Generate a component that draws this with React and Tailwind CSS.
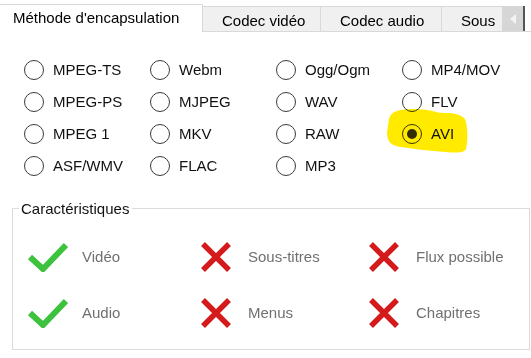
import React from 'react';

const font = { fontFamily: '"Liberation Sans", Arial, sans-serif' };

const rows = [
    ['MPEG-TS', 'Webm', 'Ogg/Ogm', 'MP4/MOV'],
    ['MPEG-PS', 'MJPEG', 'WAV', 'FLV'],
    ['MPEG 1', 'MKV', 'RAW', 'AVI'],
    ['ASF/WMV', 'FLAC', 'MP3', null],
];

const features = [
    [{ ok: true, label: 'Vidéo' }, { ok: false, label: 'Sous-titres' }, { ok: false, label: 'Flux possible' }],
    [{ ok: true, label: 'Audio' }, { ok: false, label: 'Menus' }, { ok: false, label: 'Chapitres' }],
];

const Check = () => (
    <svg width="40" height="30" viewBox="0 0 40 30">
        <path d="M2 15 L15 27 L38 3" fill="none" stroke="#3cc23c" strokeWidth="6" />
    </svg>
);

const Cross = () => (
    <svg width="32" height="30" viewBox="0 0 32 30">
        <path d="M3 2 L29 28 M29 2 L3 28" fill="none" stroke="#d41a1a" strokeWidth="5.5" />
    </svg>
);

const Radio = ({ label, checked }) => (
    <div className="relative flex items-center gap-[9px] h-[32px]">
        {checked && (
            <svg className="absolute left-[-17px] top-[-11px] mix-blend-multiply" width="84" height="48" viewBox="0 0 84 48">
                <path d="M4 12 C6 4 14 2 30 2 C45 2 52 6 58 6 C66 6 74 6 80 12 C83 20 83 34 81 42 C79 46 72 46 60 45 C45 44 30 42 16 40 C6 39 2 34 2 26 Z" fill="#ffea00" />
            </svg>
        )}
        <div className="relative w-[20px] h-[20px] rounded-full border border-[#3a3a3a] bg-white flex items-center justify-center mix-blend-multiply">
            {checked && <div className="w-[10px] h-[10px] rounded-full bg-[#333333]"></div>}
        </div>
        <span className="relative text-[15px] text-[#111111]">{label}</span>
    </div>
);

export default function App() {
    return (
        <div className="w-[531px] h-[358px] bg-white overflow-hidden" style={font}>
            {/* tab strip */}
            <div className="flex items-end h-[32px]">
                <div className="w-[203px] h-[28px] bg-white border-t border-r border-[#d9d9d9] pl-[13px] pt-[4px] text-[15px] text-black leading-[17px] whitespace-nowrap">
                    Méthode d'encapsulation
                </div>
                <div className="w-[118px] h-[26px] bg-[#f0f0f0] border-t border-r border-b border-[#d9d9d9] pl-[19px] pt-[5px] text-[15px] text-black leading-[17px]">
                    Codec vidéo
                </div>
                <div className="w-[121px] h-[26px] bg-[#f0f0f0] border-t border-r border-b border-[#d9d9d9] pl-[19px] pt-[5px] text-[15px] text-black leading-[17px]">
                    Codec audio
                </div>
                <div className="w-[60px] h-[26px] bg-[#f0f0f0] border-t border-b border-[#d9d9d9] pl-[19px] pt-[5px] text-[15px] text-black leading-[17px] whitespace-nowrap">
                    Sous
                </div>
                <div className="flex items-end h-[26px] border-b border-[#d9d9d9]">
                    <div className="w-[21px] h-[25px] bg-[#d6d6d6] flex items-center justify-center">
                        <svg width="6" height="10" viewBox="0 0 6 10"><path d="M6 0 L0 5 L6 10 Z" fill="#f4f4f4" /></svg>
                    </div>
                    <div className="w-[8px] h-[25px] bg-white border-l-2 border-[#555555]"></div>
                </div>
            </div>

            {/* radio grid */}
            <div className="pt-[22px] pl-[24px] grid grid-cols-[126px_126px_126px_126px]">
                {rows.flat().map((label, i) =>
                    label ? <Radio key={i} label={label} checked={label === 'AVI'} /> : <div key={i}></div>
                )}
            </div>

            {/* characteristics */}
            <fieldset className="mt-[18px] ml-[12px] w-[518px] border border-[#dcdcdc] px-0 pb-[8px]">
                <legend className="ml-[6px] pl-[2px] pr-[3px] text-[15px] leading-[17px] text-[#111111]">Caractéristiques</legend>
                <div className="pt-[12px] pl-[15px]">
                    {features.map((row, r) => (
                        <div key={r} className="grid grid-cols-[172px_168px_1fr] h-[56px] items-center">
                            {row.map((f, c) => (
                                <div key={c} className={`flex items-center ${f.ok ? 'gap-[14px]' : 'gap-[16px]'}`}>
                                    {f.ok ? <Check /> : <Cross />}
                                    <span className="text-[15px] text-[#707070]">{f.label}</span>
                                </div>
                            ))}
                        </div>
                    ))}
                </div>
            </fieldset>
        </div>
    );
}
